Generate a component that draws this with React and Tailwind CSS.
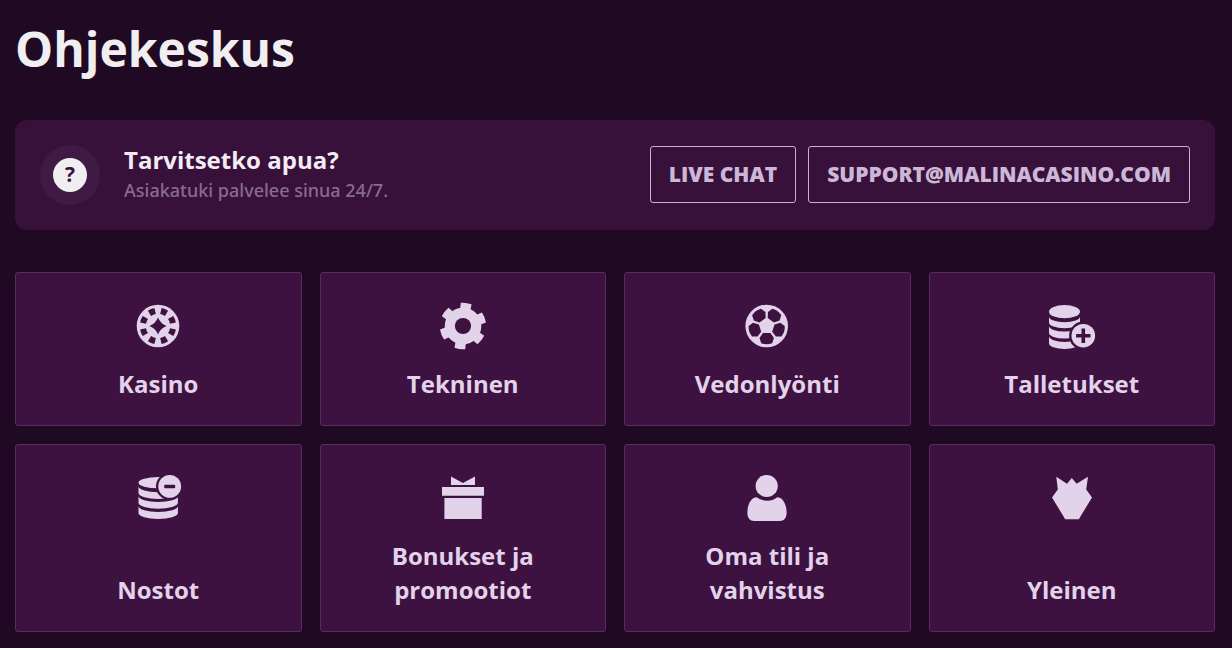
const TURNS_8 = [22.5, 67.5, 112.5, 157.5, 202.5, 247.5, 292.5, 337.5];
const TURNS_6 = [8, 68, 128, 188, 248, 308];
const TURNS_5 = [0, 72, 144, 216, 288];

function Icon({ children }) {
  return (
    <svg viewBox="0 0 48 48" className="size-12 shrink-0 fill-current" aria-hidden="true">
      {children}
    </svg>
  );
}

function ChipIcon() {
  return (
    <Icon>
      <circle cx="24" cy="24" r="21.3" />
      <g className="fill-[#3d1240]">
        {TURNS_8.map((a) => (
          <path key={a} d="M20.5 6.1Q24 5.2 27.5 6.1L26.6 12.1Q24 11.4 21.4 12.1Z" transform={`rotate(${a} 24 24)`} />
        ))}
        <path d="M24 15.5Q26.4 21.6 32.5 24Q26.4 26.4 24 32.5Q21.6 26.4 15.5 24Q21.6 21.6 24 15.5Z" />
      </g>
    </Icon>
  );
}

function GearIcon() {
  return (
    <Icon>
      <circle cx="24" cy="24" r="18.3" />
      {TURNS_6.map((a) => (
        <path key={a} d="M18.6 1.4Q24 0.2 29.4 1.4L29.2 9H18.8Z" transform={`rotate(${a} 24 24)`} />
      ))}
      <circle cx="24" cy="24" r="8.1" className="fill-[#3d1240]" />
    </Icon>
  );
}

function BallIcon() {
  return (
    <Icon>
      <circle cx="23.7" cy="24" r="21.3" />
      <g className="fill-[#3d1240]">
        {TURNS_5.map((a) => (
          <path
            key={a}
            d="M19.9 31H27.5L30.9 36L29.2 41.2Q23.7 43.4 18.2 41.2L16.5 36Z"
            transform={`rotate(${a} 23.7 24)`}
          />
        ))}
      </g>
    </Icon>
  );
}

function DepositIcon() {
  return (
    <Icon>
      <ellipse cx="16.5" cy="9.7" rx="15.5" ry="6.6" />
      <path d="M1 14.4A15.5 5.8 0 0 0 32 14.4V20.5A15.5 5.8 0 0 1 1 20.5Z" />
      <path d="M1 23.8A15.5 5.8 0 0 0 32 23.8V30.8A15.5 5.8 0 0 1 1 30.8Z" />
      <path d="M1 34.1A15.5 5.8 0 0 0 32 34.1V41.2A15.5 5.8 0 0 1 1 41.2Z" />
      <circle cx="35.3" cy="33.7" r="14.2" className="fill-[#3d1240]" />
      <circle cx="35.3" cy="33.7" r="11.8" />
      <path d="M33.5 26.5H37.1V31.9H42.5V35.5H37.1V40.9H33.5V35.5H28.1V31.9H33.5Z" className="fill-[#3d1240]" />
    </Icon>
  );
}

function WithdrawIcon() {
  return (
    <Icon>
      <ellipse cx="24.2" cy="8.7" rx="19.7" ry="5.6" />
      <path d="M4.5 12.2A19.7 6 0 0 0 43.9 12.2V19A19.7 6 0 0 1 4.5 19Z" />
      <path d="M4.5 22A19.7 6 0 0 0 43.9 22V28.8A19.7 6 0 0 1 4.5 28.8Z" />
      <path d="M4.5 32A19.7 6 0 0 0 43.9 32V39A19.7 6 0 0 1 4.5 39Z" />
      <circle cx="35.7" cy="12.4" r="13.7" className="fill-[#3d1240]" />
      <circle cx="35.7" cy="12.4" r="11.4" />
      <rect x="30.2" y="10.8" width="11" height="3.4" rx="1" className="fill-[#3d1240]" />
    </Icon>
  );
}

function GiftIcon() {
  return (
    <Icon>
      <path d="M12 2.6L23.9 9L36 2.6V11H12Z" />
      <path d="M3 13H45V21.7H3Z" />
      <path d="M5.4 24H42.7V45H5.4Z" />
    </Icon>
  );
}

function UserIcon() {
  return (
    <Icon>
      <circle cx="23.7" cy="12" r="11.1" />
      <path d="M13.8 23.2Q18 26.8 24 26.8Q30 26.8 34.2 23.2C40.1 23.2 43.6 31 43.6 38.5C43.6 44 41.2 47 36.7 47H11.3C6.8 47 4.4 44 4.4 38.5C4.4 31 7.9 23.2 13.8 23.2Z" />
    </Icon>
  );
}

function BerryIcon() {
  return (
    <Icon>
      <path d="M8.3 2.8L19 9.8L23.8 4L28.6 9.8L40 2.8L38.2 15.4L44 23.4L30.8 45.3H17.2L4 23.4L9.8 15.4Z" />
    </Icon>
  );
}

const TOPICS = [
  { label: "Kasino", icon: ChipIcon },
  { label: "Tekninen", icon: GearIcon },
  { label: "Vedonlyönti", icon: BallIcon },
  { label: "Talletukset", icon: DepositIcon },
  { label: "Nostot", icon: WithdrawIcon },
  { label: "Bonukset ja promootiot", icon: GiftIcon },
  { label: "Oma tili ja vahvistus", icon: UserIcon },
  { label: "Yleinen", icon: BerryIcon },
];

function Topic({ label, icon: TopicIcon }) {
  return (
    <a
      href="#"
      className="flex flex-col items-center justify-between gap-[17px] rounded-[3px] border border-[#582c5e] bg-[#3d1240] px-12 pt-[29px] pb-6 text-[#e3d3ea]"
    >
      <TopicIcon />
      <span className="text-center text-2xl leading-[34px] font-bold">{label}</span>
    </a>
  );
}

const ACTION =
  "flex h-[57px] items-center rounded-[3px] border border-[#d3a9de] px-[18px] text-[21px] font-extrabold text-[#cdb7d8] uppercase";

export default function App() {
  return (
    <main className="min-h-screen bg-[#200922] pt-4 pr-[17px] pb-4 pl-[15px] font-['Open_Sans',sans-serif]">
      <h1 className="text-5xl leading-[66px] font-bold text-[#f0eef0]">Ohjekeskus</h1>

      <section className="mt-[38px] flex items-center gap-6 rounded-xl bg-[#38113a] p-[25px]">
        <div className="flex size-[60px] shrink-0 items-center justify-center rounded-full bg-[#3f1a44]">
          <span className="flex size-[34px] items-center justify-center rounded-full bg-[#f0eef0] text-[21px] font-bold text-[#38113a]">
            ?
          </span>
        </div>
        <div className="grow">
          <h2 className="text-2xl leading-[30px] font-bold text-[#f4ecf5]">Tarvitsetko apua?</h2>
          <p className="font-['Noto_Sans',sans-serif] text-lg leading-[30px] font-medium text-[#886c8d]">
            Asiakatuki palvelee sinua 24/7.
          </p>
        </div>
        <div className="flex gap-3 pb-px">
          <button type="button" className={ACTION}>
            Live chat
          </button>
          <a href="mailto:support@malinacasino.com" className={ACTION}>
            support@malinacasino.com
          </a>
        </div>
      </section>

      <nav className="mt-[42px] grid grid-cols-4 gap-[18px]">
        {TOPICS.map((topic) => (
          <Topic key={topic.label} {...topic} />
        ))}
      </nav>
    </main>
  );
}
